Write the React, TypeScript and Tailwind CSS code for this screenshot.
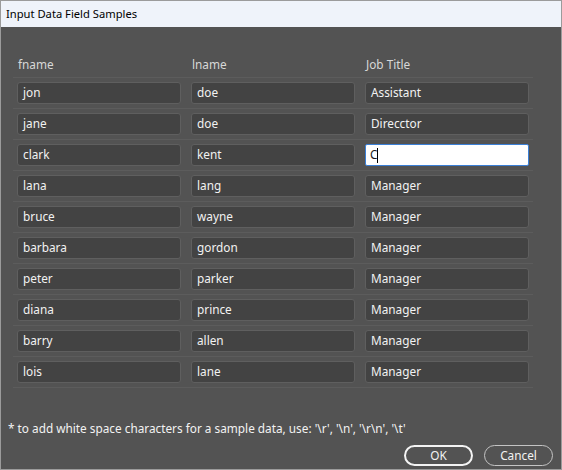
import React from "react";

const rows: [string, string, string][] = [
  ["jon", "doe", "Assistant"],
  ["jane", "doe", "Direcctor"],
  ["clark", "kent", "C"],
  ["lana", "lang", "Manager"],
  ["bruce", "wayne", "Manager"],
  ["barbara", "gordon", "Manager"],
  ["peter", "parker", "Manager"],
  ["diana", "prince", "Manager"],
  ["barry", "allen", "Manager"],
  ["lois", "lane", "Manager"],
];

function Field({ value, active }: { value: string; active?: boolean }) {
  if (active) {
    return (
      <div className="h-[22px] rounded-[2px] border border-[#3a7fd6] bg-white pl-[4px] flex items-center text-[11.8px] text-[#1a1a1a]">
        <span>{value}</span>
        <span className="inline-block w-px h-[15px] bg-black" />
      </div>
    );
  }
  return (
    <div className="h-[22px] rounded-[3px] border border-[#5f5f5f] bg-[#434343] pl-[5px] flex items-center text-[11.8px] text-[#f2f2f2]">
      {value}
    </div>
  );
}

export default function App() {
  return (
    <div
      className="w-[562px] h-[470px] border border-[#9b9b9b] flex flex-col overflow-hidden"
      style={{ fontFamily: '"Noto Sans", "Open Sans", sans-serif' }}
    >
      <div className="h-[26px] bg-[#eff3fa] flex items-center pl-[5px] text-[11.2px] text-black shrink-0">
        Input Data Field Samples
      </div>
      <div className="flex-1 bg-[#535353] flex flex-col">
        <div className="ml-[12px] w-[520px] pt-[29px]">
          <div className="grid grid-cols-3 gap-[10px] px-[4px] pb-[5px] text-[11.8px] leading-[16px] text-[#d8d8d8]">
            <div className="pl-[1px]">fname</div>
            <div className="pl-[1px]">lname</div>
            <div className="pl-[1px]">Job Title</div>
          </div>
          <div className="h-px bg-[#5c5c5c]" />
          {rows.map((r, i) => (
            <div key={i}>
              <div className="grid grid-cols-3 gap-[10px] px-[4px] py-[4px]">
                <Field value={r[0]} />
                <Field value={r[1]} />
                <Field value={r[2]} active={i === 2} />
              </div>
              <div className="h-px bg-[#5c5c5c]" />
            </div>
          ))}
        </div>
        <div className="mt-[32px] pl-[7px] text-[11.8px] leading-[16px] text-[#f2f2f2]">
          * to add white space characters for a sample data, use: '\r', '\n', '\r\n', '\t'
        </div>
        <div className="mt-[9px] flex justify-end gap-[11px] pr-[8px]">
          <button className="w-[69px] h-[21px] rounded-full border-2 border-[#f4f4f4] text-[11.8px] text-[#f2f2f2] flex items-center justify-center">
            OK
          </button>
          <button className="w-[69px] h-[21px] rounded-full border border-[#c4c4c4] text-[11.8px] text-[#f2f2f2] flex items-center justify-center">
            Cancel
          </button>
        </div>
      </div>
    </div>
  );
}
